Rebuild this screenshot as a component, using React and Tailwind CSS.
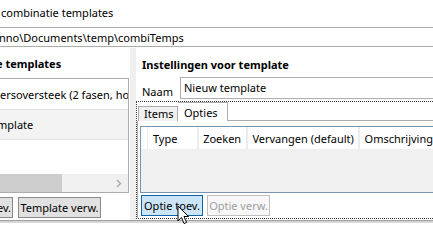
export default function App() {
  return (
    <div className="relative w-[433px] h-[243px] overflow-hidden bg-white text-[11px] leading-[15px] text-black font-['Noto_Sans',sans-serif]">
      {/* window title, cut off on the left */}
      <div className="h-[27px] pt-[5px] pl-[1px] whitespace-nowrap">combinatie templates</div>

      {/* folder path */}
      <div className="h-[20px] border-y border-[#acacac] pt-[2px] -ml-[1px] whitespace-nowrap">
        nno\Documents\temp\combiTemps
      </div>
      <div className="h-[1px]" />

      <div className="flex h-[172px]">
        {/* left: template list */}
        <div className="w-[130px] flex flex-col">
          <div className="h-[30px] pt-[8px] font-bold whitespace-nowrap -ml-[4px]">e templates</div>
          <div className="h-[115px] w-[129px] border-y border-r border-[#acacac] flex flex-col overflow-hidden">
            <div className="h-[31px] border-b border-[#e3e3e3] flex items-center whitespace-nowrap overflow-hidden">
              ersoversteek (2 fasen, ho
            </div>
            <div className="h-[30px] border-b border-[#e3e3e3] bg-[#f3f3f3] flex items-center whitespace-nowrap -ml-[3px]">
              mplate
            </div>
            <div className="flex-1" />
            <div className="h-[18px] bg-[#f0f0f0] flex items-center">
              <div className="h-full w-[62px] bg-[#cdcdcd]" />
              <div className="flex-1" />
              <svg width="6" height="9" viewBox="0 0 6 9" className="mr-[6px]">
                <path d="M1 1 L4.5 4.5 L1 8" fill="none" stroke="#a3a3a3" strokeWidth="1.2" />
              </svg>
            </div>
          </div>
          <div className="flex gap-[5px] pt-[4px] -ml-[40px]">
            <button className="h-[21px] w-[53px] border border-[#8a8a8a] bg-[#e1e1e1] text-right pr-[1px] leading-[18px]">toev.</button>
            <button className="h-[21px] w-[83px] border border-[#8a8a8a] bg-[#e1e1e1] leading-[18px] whitespace-nowrap">Template verw.</button>
          </div>
        </div>

        {/* splitter */}
        <div className="w-[6px] bg-[#f0f0f0]" />

        {/* right: template settings */}
        <div className="flex-1 flex flex-col min-w-0">
          <div className="h-[29px] pt-[9px] pl-[6px] font-bold whitespace-nowrap">Instellingen voor template</div>
          <div className="h-[22px] flex">
            <div className="w-[44px] pl-[6px] pt-[7px]">Naam</div>
            <div className="flex-1 border border-r-0 border-[#acacac] pl-[3px] pt-[2px] whitespace-nowrap">Nieuw template</div>
          </div>
          <div className="h-[2px]" />

          {/* tab control with focus rectangle */}
          <div className="h-[118px] border-y border-l border-dotted border-[#3a3a3a] flex flex-col">
            <div className="h-[19px] flex items-end pl-[1px]">
              <div className="h-[15px] w-[40px] border border-b-0 border-[#acacac] bg-[#f0f0f0] pl-[5px] leading-[14px]">Items</div>
              <div className="h-[19px] w-[50px] border border-b-0 border-l-0 border-[#acacac] bg-white pl-[6px] pt-[2px]">Opties</div>
              <div className="flex-1 border-b border-[#acacac]" />
            </div>
            <div className="flex-1 border-l border-[#acacac] bg-white flex flex-col pl-[2px] pt-[5px]">
              <div className="h-[67px] border border-r-0 border-[#7a94b4] bg-[#f0f0f0] flex flex-col">
                <div className="h-[23px] bg-white flex whitespace-nowrap border-b border-[#f0f0f0]">
                  <div className="w-[6px]" />
                  <div className="w-[53px] pl-[5px] pt-[4px] border-l border-r-2 border-[#ececec]">Type</div>
                  <div className="w-[50px] pl-[4px] pt-[4px] border-r-2 border-[#ececec]">Zoeken</div>
                  <div className="w-[113px] pl-[4px] pt-[4px] border-r-2 border-[#ececec]">Vervangen (default)</div>
                  <div className="pl-[5px] pt-[4px]">Omschrijving</div>
                </div>
              </div>
              <div className="flex gap-[4px] pt-[2px] pl-[1px]">
                <button className="h-[21px] w-[62px] border border-[#0f63a8] bg-[#cce4f7] leading-[18px] whitespace-nowrap">Optie toev.</button>
                <button className="h-[21px] w-[63px] border border-[#bfbfbf] bg-[#f7f7f7] text-[#a0a0a0] leading-[18px] whitespace-nowrap">Optie verw.</button>
              </div>
            </div>
          </div>
        </div>
      </div>

      {/* bottom edge of the window */}
      <div className="h-[3px] border-t border-[#a0a0a0] bg-[#d6d6d6]" />

      {/* mouse cursor */}
      <svg width="13" height="20" viewBox="0 0 13 20" className="absolute left-[177px] top-[205px]">
        <path d="M1 1 L1 16 L4.5 12.5 L7 18.5 L9.5 17.5 L7 11.5 L11.5 11.5 Z" fill="white" stroke="black" strokeWidth="1" strokeLinejoin="miter" />
      </svg>
    </div>
  );
}
